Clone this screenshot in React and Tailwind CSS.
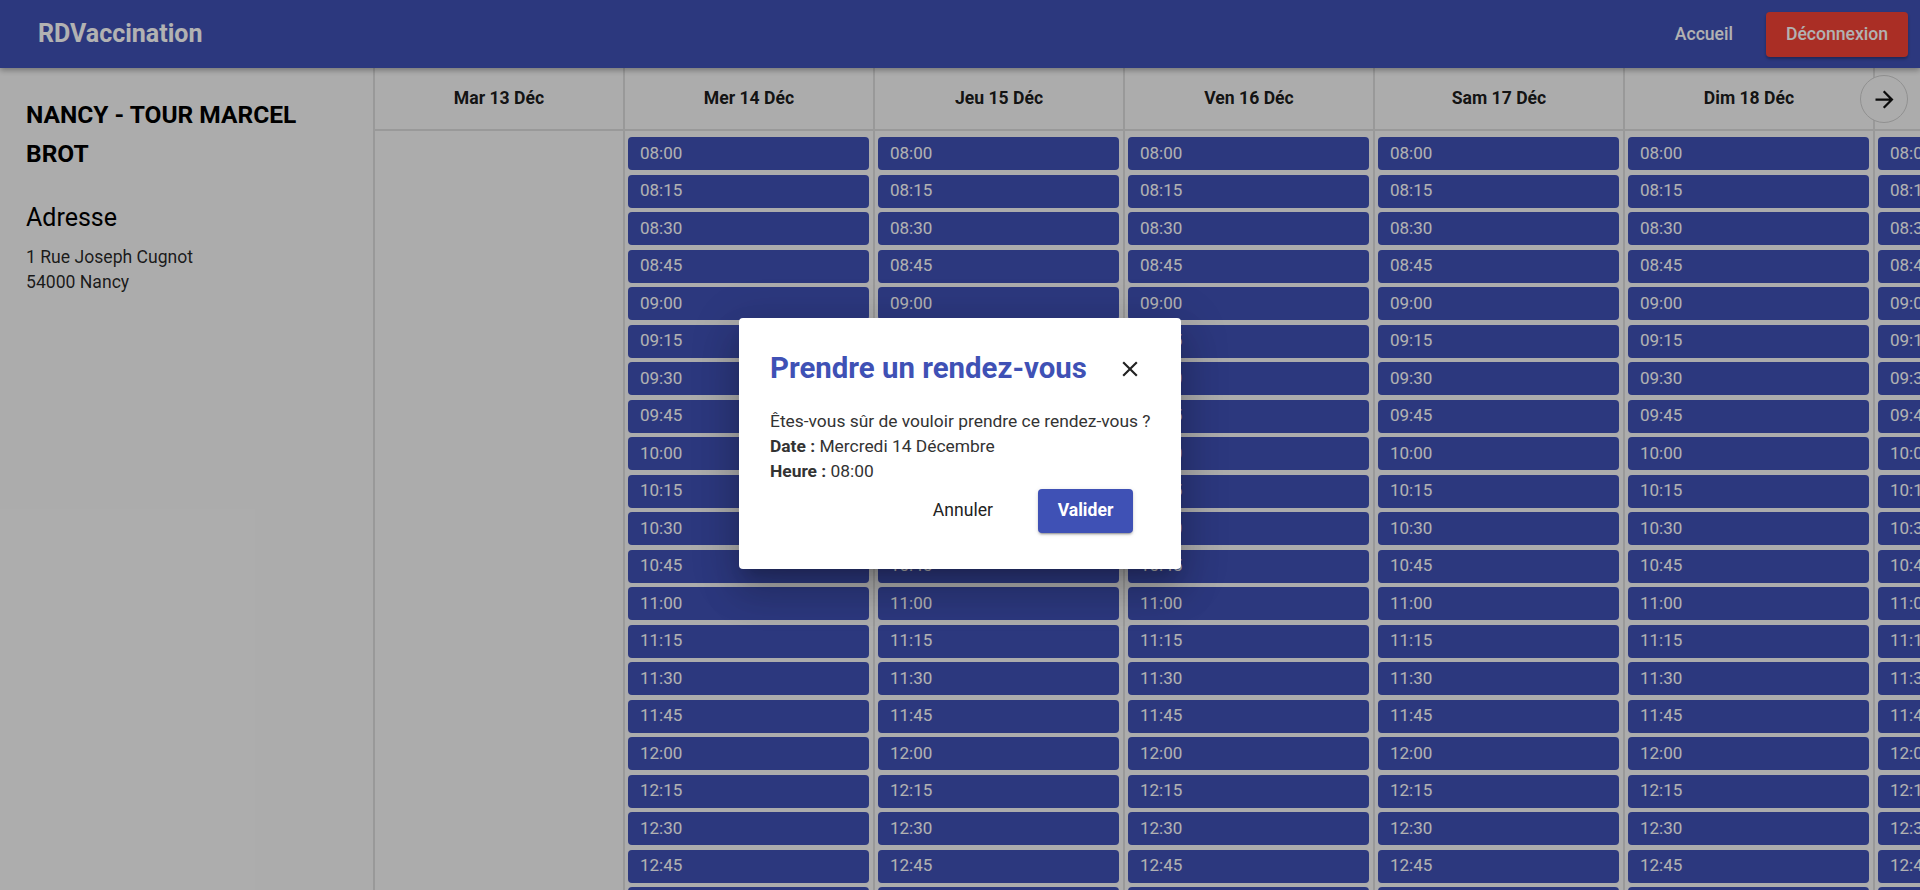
import React from "react";

const times = [];
for (let h = 8; h < 18; h++) {
  for (const m of [0, 15, 30, 45]) {
    times.push(`${String(h).padStart(2, "0")}:${String(m).padStart(2, "0")}`);
  }
}

const days = [
  { label: "Mar 13 Déc", open: false },
  { label: "Mer 14 Déc", open: true },
  { label: "Jeu 15 Déc", open: true },
  { label: "Ven 16 Déc", open: true },
  { label: "Sam 17 Déc", open: true },
  { label: "Dim 18 Déc", open: true },
  { label: "Lun 19 Déc", open: true },
];

function DayColumn({ day }) {
  return (
    <div className="w-[250px] shrink-0 border-l-2 border-[#dbdbdb] flex flex-col">
      <div className="h-[63px] shrink-0 border-b-2 border-[#dbdbdb] flex items-center justify-center text-[17.6px] font-bold text-black/90">
        {day.label}
      </div>
      <div className="flex flex-col gap-[4.5px] pt-[6px] pl-[3px] pr-[4px]">
        {day.open &&
          times.map((t) => (
            <button
              key={t}
              className="h-[33px] w-full rounded-[4px] bg-[#3f51b5] pl-[12px] text-left text-[17px] text-white"
            >
              {t}
            </button>
          ))}
      </div>
    </div>
  );
}

export default function App() {
  return (
    <div className="relative h-screen w-full overflow-hidden bg-[#f7f7f7] font-['Roboto',sans-serif]">
      <header className="relative z-10 flex h-[68px] items-center bg-[#3f51b5] pl-[38px] pr-[12px] shadow-[0_2px_6px_rgba(0,0,0,0.35)]">
        <div className="text-[25px] font-bold text-white">RDVaccination</div>
        <div className="ml-auto flex items-center">
          <span className="mr-[33px] text-[17.6px] font-medium text-white">Accueil</span>
          <button className="flex h-[45px] w-[142px] items-center justify-center rounded-[4px] bg-[#f44336] text-[17.6px] font-medium text-white shadow-[0_2px_3px_rgba(0,0,0,0.3)]">
            Déconnexion
          </button>
        </div>
      </header>

      <div className="flex h-[calc(100%-68px)]">
        <aside className="w-[373px] shrink-0 px-[26px] pt-[27px] text-black">
          <h1 className="text-[24.5px] font-bold leading-[39px]">NANCY - TOUR MARCEL BROT</h1>
          <h2 className="mt-[29px] text-[25px] leading-[32px]">Adresse</h2>
          <p className="mt-[11px] text-[17.6px] leading-[25px] text-black/85">
            1 Rue Joseph Cugnot
            <br />
            54000 Nancy
          </p>
        </aside>

        <div className="relative flex flex-1 overflow-hidden">
          {days.map((d) => (
            <DayColumn key={d.label} day={d} />
          ))}
          <button className="absolute right-[12px] top-[7px] flex h-[48px] w-[48px] items-center justify-center rounded-full border border-[#cfcfcf] bg-[#f7f7f7]">
            <svg viewBox="0 0 24 24" className="h-[27px] w-[27px]" fill="#111">
              <path d="M12 4l-1.41 1.41L16.17 11H4v2h12.17l-5.58 5.59L12 20l8-8z" />
            </svg>
          </button>
        </div>
      </div>

      <div className="absolute inset-0 z-20 bg-black/30" />

      <div className="absolute inset-0 z-30 flex items-center justify-center">
        <div className="mb-[4px] w-[442px] rounded-[4px] bg-white px-[31px] pb-[36px] pt-[32px] shadow-[0_11px_15px_-7px_rgba(0,0,0,0.2),0_24px_38px_3px_rgba(0,0,0,0.14),0_9px_46px_8px_rgba(0,0,0,0.12)]">
          <div className="flex h-[36px] items-center justify-between">
            <h3 className="text-[29.4px] font-bold leading-[36px] text-[#3f51b5]">Prendre un rendez-vous</h3>
            <svg viewBox="0 0 24 24" className="mr-[7px] mt-[3px] h-[26px] w-[26px]" fill="#222">
              <path d="M19 6.41 17.59 5 12 10.59 6.41 5 5 6.41 10.59 12 5 17.59 6.41 19 12 13.41 17.59 19 19 17.59 13.41 12z" />
            </svg>
          </div>
          <div className="mt-[23px] whitespace-nowrap text-[17.4px] leading-[25px] text-[#333]">
            <p>Êtes-vous sûr de vouloir prendre ce rendez-vous ?</p>
            <p>
              <span className="font-bold">Date :</span> Mercredi 14 Décembre
            </p>
            <p>
              <span className="font-bold">Heure :</span> 08:00
            </p>
          </div>
          <div className="mr-[17px] mt-[5px] flex items-center justify-end">
            <button className="mr-[29px] h-[44px] px-[16px] text-[17.6px] text-[#222]">Annuler</button>
            <button className="h-[44px] w-[95px] rounded-[4px] bg-[#3f51b5] text-[17.6px] font-bold text-white shadow-[0_3px_1px_-2px_rgba(0,0,0,0.2),0_2px_2px_0_rgba(0,0,0,0.14),0_1px_5px_0_rgba(0,0,0,0.12)]">
              Valider
            </button>
          </div>
        </div>
      </div>
    </div>
  );
}
